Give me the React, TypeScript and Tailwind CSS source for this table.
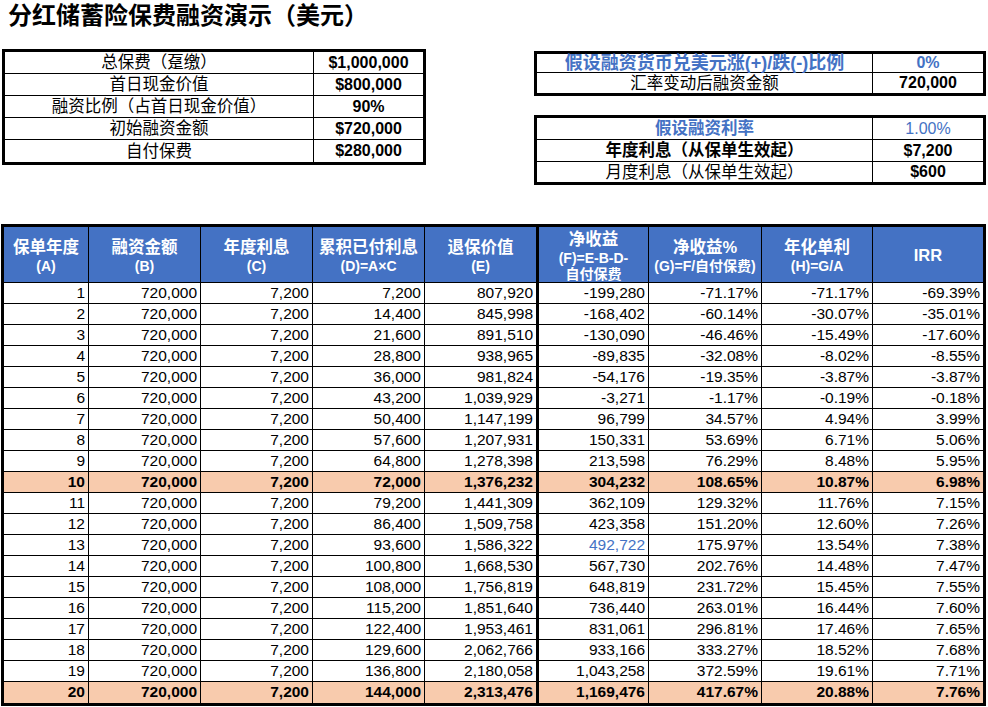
import React from 'react';

const rows: string[][] = [
  ['1', '720,000', '7,200', '7,200', '807,920', '-199,280', '-71.17%', '-71.17%', '-69.39%'],
  ['2', '720,000', '7,200', '14,400', '845,998', '-168,402', '-60.14%', '-30.07%', '-35.01%'],
  ['3', '720,000', '7,200', '21,600', '891,510', '-130,090', '-46.46%', '-15.49%', '-17.60%'],
  ['4', '720,000', '7,200', '28,800', '938,965', '-89,835', '-32.08%', '-8.02%', '-8.55%'],
  ['5', '720,000', '7,200', '36,000', '981,824', '-54,176', '-19.35%', '-3.87%', '-3.87%'],
  ['6', '720,000', '7,200', '43,200', '1,039,929', '-3,271', '-1.17%', '-0.19%', '-0.18%'],
  ['7', '720,000', '7,200', '50,400', '1,147,199', '96,799', '34.57%', '4.94%', '3.99%'],
  ['8', '720,000', '7,200', '57,600', '1,207,931', '150,331', '53.69%', '6.71%', '5.06%'],
  ['9', '720,000', '7,200', '64,800', '1,278,398', '213,598', '76.29%', '8.48%', '5.95%'],
  ['10', '720,000', '7,200', '72,000', '1,376,232', '304,232', '108.65%', '10.87%', '6.98%'],
  ['11', '720,000', '7,200', '79,200', '1,441,309', '362,109', '129.32%', '11.76%', '7.15%'],
  ['12', '720,000', '7,200', '86,400', '1,509,758', '423,358', '151.20%', '12.60%', '7.26%'],
  ['13', '720,000', '7,200', '93,600', '1,586,322', '492,722', '175.97%', '13.54%', '7.38%'],
  ['14', '720,000', '7,200', '100,800', '1,668,530', '567,730', '202.76%', '14.48%', '7.47%'],
  ['15', '720,000', '7,200', '108,000', '1,756,819', '648,819', '231.72%', '15.45%', '7.55%'],
  ['16', '720,000', '7,200', '115,200', '1,851,640', '736,440', '263.01%', '16.44%', '7.60%'],
  ['17', '720,000', '7,200', '122,400', '1,953,461', '831,061', '296.81%', '17.46%', '7.65%'],
  ['18', '720,000', '7,200', '129,600', '2,062,766', '933,166', '333.27%', '18.52%', '7.68%'],
  ['19', '720,000', '7,200', '136,800', '2,180,058', '1,043,258', '372.59%', '19.61%', '7.71%'],
  ['20', '720,000', '7,200', '144,000', '2,313,476', '1,169,476', '417.67%', '20.88%', '7.76%'],
];

const headers: { title: string; subs: string[] }[] = [
  { title: '保单年度', subs: ['(A)'] },
  { title: '融资金额', subs: ['(B)'] },
  { title: '年度利息', subs: ['(C)'] },
  { title: '累积已付利息', subs: ['(D)=A×C'] },
  { title: '退保价值', subs: ['(E)'] },
  { title: '净收益', subs: ['(F)=E-B-D-', '自付保费'] },
  { title: '净收益%', subs: ['(G)=F/自付保费)'] },
  { title: '年化单利', subs: ['(H)=G/A'] },
  { title: 'IRR', subs: [] },
];

// thick line after 退保价值, none on the last column (outer border covers it)
const colBorder = (i: number) =>
  i === 4 ? 'border-r-[3px]' : i === 8 ? 'border-r-0' : 'border-r';

interface BoxRow {
  label: string;
  value: string;
  h: string;
  labelCls?: string;
  valueCls?: string;
}

const SummaryBox: React.FC<{ rows: BoxRow[]; labelW: string; className?: string }> = ({ rows, labelW, className }) => (
  <div className={`border-[3px] border-black ${className ?? ''}`}>
    {rows.map((r, i) => (
      <div
        key={r.label}
        className={`flex ${r.h} ${i < rows.length - 1 ? 'border-b border-black' : ''}`}
      >
        <div className={`${labelW} shrink-0 border-r border-black flex items-center justify-center leading-none whitespace-nowrap ${r.labelCls ?? 'text-[16.5px]'}`}>
          {r.label}
        </div>
        <div className={`flex-1 flex items-center justify-center text-[16px] leading-none ${r.valueCls ?? 'font-bold'}`}>
          {r.value}
        </div>
      </div>
    ))}
  </div>
);

export default function App() {
  return (
    <div className="w-[988px] h-[707px] bg-white overflow-hidden text-black font-['Liberation_Sans','Noto_Sans_CJK_SC',sans-serif]">
      <div className="pl-[8px] h-[32px] text-[24px] leading-[32px] font-bold">
        分红储蓄险保费融资演示（美元）
      </div>

      <div className="flex items-start px-[2px]">
        <SummaryBox
          className="mt-[17px] w-[424px]"
          labelW="w-[309px]"
          rows={[
            { label: '总保费（趸缴）', value: '$1,000,000', h: 'h-[22px]' },
            { label: '首日现金价值', value: '$800,000', h: 'h-[22px]' },
            { label: '融资比例（占首日现金价值）', value: '90%', h: 'h-[22px]' },
            { label: '初始融资金额', value: '$720,000', h: 'h-[22px]' },
            { label: '自付保费', value: '$280,000', h: 'h-[22px]' },
          ]}
        />
        <div className="ml-auto w-[452px] mt-[19px] flex flex-col gap-[19px]">
          <SummaryBox
            labelW="w-[336px]"
            rows={[
              {
                label: '假设融资货币兑美元涨(+)/跌(-)比例',
                value: '0%',
                h: 'h-[19px]',
                labelCls: 'text-[18px] font-bold text-[#4472C4]',
                valueCls: 'font-bold text-[#4472C4]',
              },
              { label: '汇率变动后融资金额', value: '720,000', h: 'h-[20px]' },
            ]}
          />
          <SummaryBox
            labelW="w-[336px]"
            rows={[
              {
                label: '假设融资利率',
                value: '1.00%',
                h: 'h-[22px]',
                labelCls: 'text-[16.5px] font-bold text-[#4472C4]',
                valueCls: 'text-[#4472C4]',
              },
              { label: '年度利息（从保单生效起）', value: '$7,200', h: 'h-[22px]', labelCls: 'text-[16.5px] font-bold' },
              { label: '月度利息（从保单生效起）', value: '$600', h: 'h-[20px]' },
            ]}
          />
        </div>
      </div>

      <div className="mt-[39px] ml-[1px] w-[985px] border-[3px] border-black grid grid-cols-[85px_112px_112px_112px_114px_110px_113px_111px_110px]">
        {headers.map((h, i) => (
          <div
            key={h.title}
            className={`h-[56px] bg-[#4472C4] text-white font-bold border-b border-black ${colBorder(i)} flex flex-col items-center justify-center text-center`}
          >
            <div className="text-[16.5px] leading-[22px]">{h.title}</div>
            {h.subs.map((s) => (
              <div key={s} className="text-[14px] leading-[16px] whitespace-nowrap">
                {s}
              </div>
            ))}
          </div>
        ))}
        {rows.map((r, ri) =>
          r.map((v, ci) => {
            const hl = r[0] === '10' || r[0] === '20';
            const blue = r[0] === '13' && ci === 5;
            return (
              <div
                key={`${ri}-${ci}`}
                className={`h-[21px] ${ri < rows.length - 1 ? 'border-b' : ''} border-black ${colBorder(ci)} text-right pr-[3px] text-[15.5px] leading-[20px] whitespace-nowrap ${hl ? 'bg-[#F8CBAD] font-bold' : ''} ${blue ? 'text-[#4472C4]' : ''}`}
              >
                {v}
              </div>
            );
          })
        )}
      </div>
    </div>
  );
}
